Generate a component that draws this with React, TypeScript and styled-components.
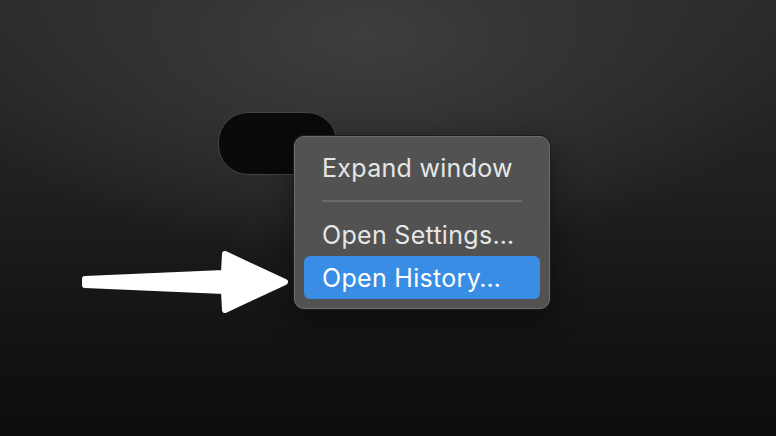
import React from "react";
import styled, { createGlobalStyle } from "styled-components";

const GlobalStyle = createGlobalStyle`
  html, body { margin: 0; padding: 0; }
  body { background: #111; font-family: Inter, "Noto Sans", sans-serif; }
`;

const Stage = styled.div`
  position: relative;
  width: 776px;
  height: 436px;
  overflow: hidden;
  background:
    radial-gradient(ellipse 75% 65% at 47% 8%, #3e3e3e 0%, #343434 30%, rgba(40,40,40,0) 78%),
    linear-gradient(180deg, #2a2a2a 0%, #1f1f1f 45%, #151515 70%, #0d0d0d 100%);
`;

const Pill = styled.div`
  position: absolute;
  left: 218px;
  top: 112px;
  width: 119px;
  height: 63px;
  box-sizing: border-box;
  border-radius: 30px;
  background: #0a0a0a;
  border: 1px solid #444;
`;

const Menu = styled.div`
  position: absolute;
  left: 294px;
  top: 136px;
  width: 256px;
  box-sizing: border-box;
  padding: 9px 9px;
  border-radius: 10px;
  background: #525252;
  border: 1px solid #6c6c6c;
  box-shadow: 0 0 0 1px #1b1b1b, 0 10px 30px rgba(0, 0, 0, 0.45);
  display: flex;
  flex-direction: column;
`;

const Item = styled.div<{ $active?: boolean }>`
  height: 43px;
  display: flex;
  align-items: center;
  padding: 0 0 0 18px;
  border-radius: 6px;
  font-size: 25px;
  letter-spacing: 0.3px;
  color: ${(p) => (p.$active ? "#ffffff" : "#e6e6e6")};
  background: ${(p) => (p.$active ? "#3a8de5" : "transparent")};
`;

const Separator = styled.div`
  height: 2px;
  margin: 11px 18px 11px 18px;
  background: #6a6a6a;
`;

const ArrowSvg = styled.svg`
  position: absolute;
  left: 76px;
  top: 246px;
`;

export default function App() {
  return (
    <>
      <GlobalStyle />
      <Stage>
        <Pill />
        <Menu>
          <Item>Expand window</Item>
          <Separator />
          <Item>Open Settings…</Item>
          <Item $active>Open History…</Item>
        </Menu>
        <ArrowSvg width="220" height="72" viewBox="0 0 220 72">
          <path
            d="M9 33 L148 27 L149 8 L209 36 L149 64 L148 45 L9 39 Z"
            fill="#fff"
            stroke="#fff"
            strokeWidth="6"
            strokeLinejoin="round"
          />
        </ArrowSvg>
      </Stage>
    </>
  );
}
